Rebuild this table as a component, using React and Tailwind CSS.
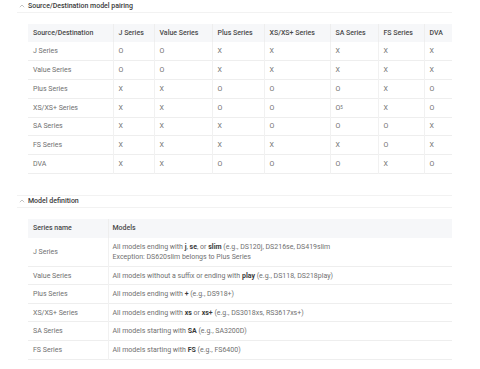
import React from "react";

const cols = ["Source/Destination", "J Series", "Value Series", "Plus Series", "XS/XS+ Series", "SA Series", "FS Series", "DVA"];
const widths = ["w-[85px]", "w-[41px]", "w-[58px]", "w-[52px]", "w-[66px]", "w-[48px]", "w-[46px]", "w-[28px]"];
const rows = [
  ["J Series", "O", "O", "X", "X", "X", "X", "X"],
  ["Value Series", "O", "O", "X", "X", "X", "X", "X"],
  ["Plus Series", "X", "X", "O", "O", "O", "X", "O"],
  ["XS/XS+ Series", "X", "X", "O", "O", "O5", "X", "O"],
  ["SA Series", "X", "X", "X", "O", "O", "O", "X"],
  ["FS Series", "X", "X", "X", "X", "X", "O", "X"],
  ["DVA", "X", "X", "O", "O", "O", "X", "O"],
];

function Chevron() {
  return (
    <svg width="6" height="4" viewBox="0 0 6 4" className="text-[#aaaaaa]">
      <path d="M0.8 3.2 L3 1 L5.2 3.2" fill="none" stroke="currentColor" strokeWidth="0.7" />
    </svg>
  );
}

function Header({ title, top }) {
  return (
    <div className={`flex items-center h-[13px] border-b border-[#f2f2f2] ${top ? "border-t" : ""}`}>
      <div className="w-[11px] flex justify-start pl-[2px]">
        <Chevron />
      </div>
      <span className="font-medium text-[#3a3a3a] text-[7px]">{title}</span>
    </div>
  );
}

function Cell({ v }) {
  if (v === "O5") {
    return (
      <span>
        O<sup className="text-[4.5px] relative -top-[0.5px]">5</sup>
      </span>
    );
  }
  return <span>{v}</span>;
}

const B = ({ children }) => <span className="font-bold text-[#3a3a3a]">{children}</span>;

const models = [
  ["J Series", (
    <>
      <div>All models ending with <B>j</B>, <B>se</B>, or <B>slim</B> (e.g., DS120j, DS216se, DS419slim</div>
      <div>Exception: DS620slim belongs to Plus Series</div>
    </>
  ), "h-[29px]"],
  ["Value Series", <>All models without a suffix or ending with <B>play</B> (e.g., DS118, DS218play)</>, "h-[18px]"],
  ["Plus Series", <>All models ending with <B>+</B> (e.g., DS918+)</>, "h-[19px]"],
  ["XS/XS+ Series", <>All models ending with <B>xs</B> or <B>xs+</B> (e.g., DS3018xs, RS3617xs+)</>, "h-[18px]"],
  ["SA Series", <>All models starting with <B>SA</B> (e.g., SA3200D)</>, "h-[19px]"],
  ["FS Series", <>All models starting with <B>FS</B> (e.g., FS6400)</>, "h-[19px]"],
];

export default function App() {
  return (
    <div className="w-[480px] h-[369px] bg-white overflow-hidden text-[7px] text-[#707070] leading-[10px]" style={{ fontFamily: "Roboto, 'Noto Sans', sans-serif" }}>
      <div className="ml-[17px] w-[435px]">
        <Header title="Source/Destination model pairing" />
        <div className="ml-[11px] mt-[11px] w-[424px]">
          <table className="border-collapse table-fixed w-[424px]">
            <thead>
              <tr className="h-[18px] bg-[#f6f7f9]">
                {cols.map((c, i) => (
                  <th key={c} className={`${widths[i]} text-left font-medium text-[#4a4a4a] pl-[5px] p-0 ${i > 0 ? "border-l border-[#eeeeee]" : ""}`}>{c}</th>
                ))}
              </tr>
            </thead>
            <tbody>
              {rows.map((r) => (
                <tr key={r[0]} className="h-[18.75px] border-b border-[#eeeeee]">
                  {r.map((v, i) => (
                    <td key={i} className={`pl-[5px] p-0 font-normal ${i > 0 ? "border-l border-[#f1f1f1]" : ""}`}>
                      <Cell v={v} />
                    </td>
                  ))}
                </tr>
              ))}
            </tbody>
          </table>
        </div>
        <div className="mt-[21px]">
          <Header title="Model definition" top />
        </div>
        <div className="ml-[11px] mt-[11px] w-[424px]">
          <table className="border-collapse table-fixed w-[424px]">
            <thead>
              <tr className="h-[19px] bg-[#f6f7f9]">
                <th className="w-[80px] text-left font-medium text-[#4a4a4a] pl-[5px] p-0">Series name</th>
                <th className="text-left font-medium text-[#4a4a4a] pl-[4px] p-0 border-l border-[#eeeeee]">Models</th>
              </tr>
            </thead>
            <tbody>
              {models.map(([name, desc, h]) => (
                <tr key={name} className={`${h} border-b border-[#eeeeee]`}>
                  <td className="pl-[5px] p-0">{name}</td>
                  <td className="pl-[4px] p-0 border-l border-[#f1f1f1]">{desc}</td>
                </tr>
              ))}
            </tbody>
          </table>
        </div>
      </div>
    </div>
  );
}
